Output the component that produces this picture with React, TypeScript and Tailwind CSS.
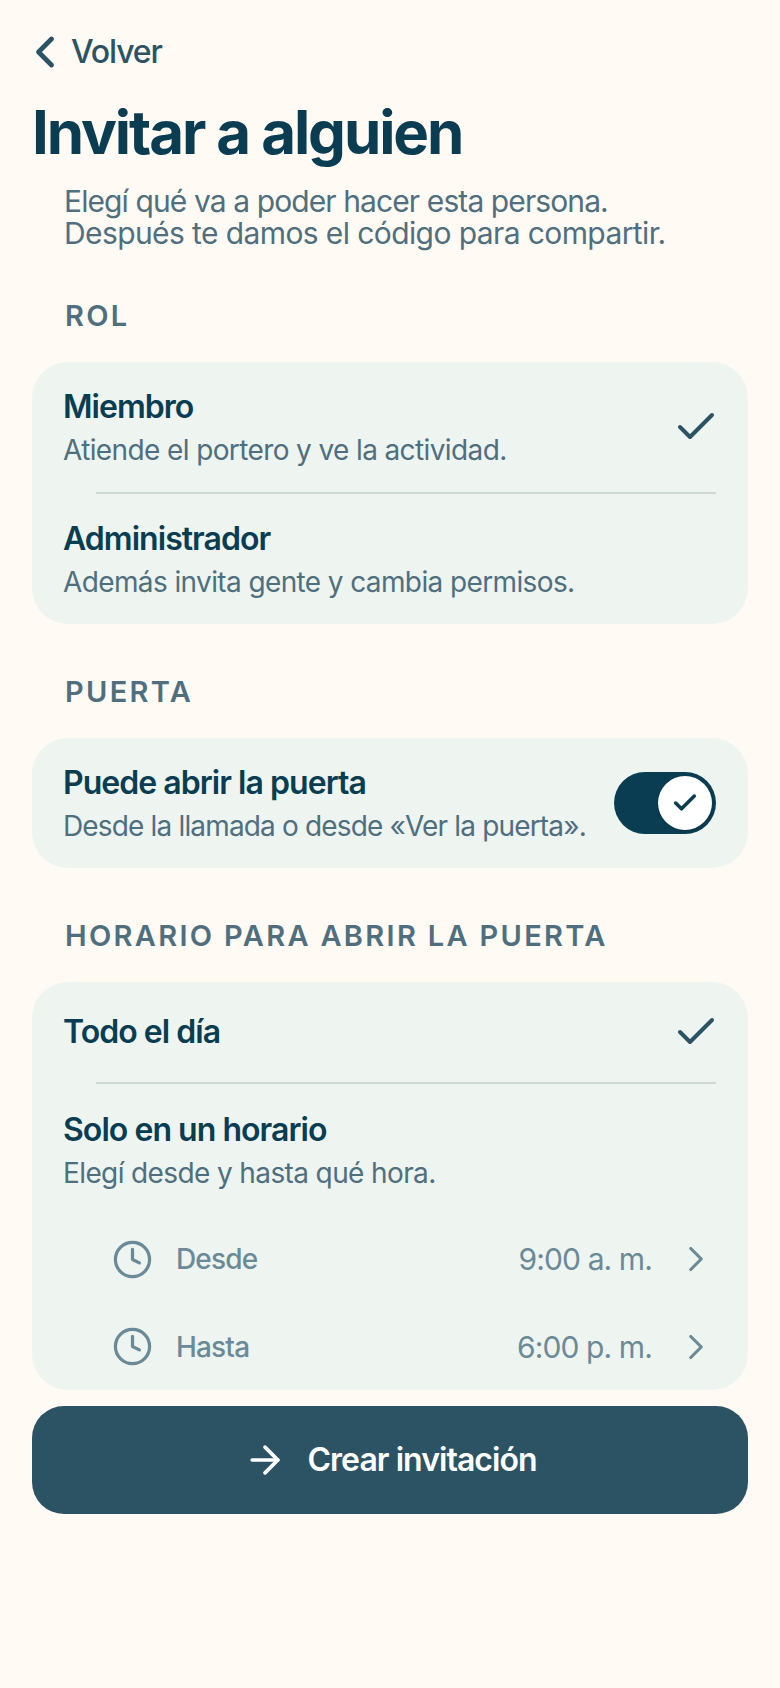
import { ArrowRight, Check, ChevronLeft, ChevronRight, Clock } from "lucide-react";

function SectionLabel({ children, className = "" }: { children: string; className?: string }) {
  return (
    <div className={`pl-[33px] text-[29px] leading-[32px] font-semibold tracking-[0.08em] text-[#4f6f7f] ${className}`}>
      {children}
    </div>
  );
}

function OptionRow({ title, sub, checked, className = "" }: { title: string; sub?: string; checked?: boolean; className?: string }) {
  return (
    <div className={`flex items-center justify-between pl-[31px] pr-[32px] ${className}`}>
      <div className={sub ? "pt-[3px]" : ""}>
        <div className="text-[32px] leading-[36px] font-semibold tracking-[-0.03em] text-[#0a3d52]">{title}</div>
        {sub && <div className="mt-[7px] text-[28px] leading-[36px] tracking-[-0.022em] text-[#4f6f7f]">{sub}</div>}
      </div>
      {checked && <Check size={48} strokeWidth={2} className="mr-[-4px] shrink-0 text-[#2c5364]" />}
    </div>
  );
}

function TimeRow({ label, value, className = "" }: { label: string; value: string; className?: string }) {
  return (
    <div className={`flex items-center pl-[80px] pr-[31px] text-[#6b8a98] ${className}`}>
      <Clock size={41} strokeWidth={1.9} className="shrink-0" />
      <span className="ml-[23px] text-[28px] leading-[36px] font-medium tracking-[-0.03em]">{label}</span>
      <span className="ml-auto text-[30px] leading-[36px] tracking-[-0.03em]">{value}</span>
      <ChevronRight size={42} strokeWidth={1.8} className="ml-[23px] shrink-0" />
    </div>
  );
}

export default function App() {
  return (
    <div className="min-h-[1688px] bg-[#fffaf3] px-[32px] pt-[26px] font-['Inter',sans-serif]">
      <div className="flex items-center text-[#2c5364]">
        <ChevronLeft size={52} strokeWidth={2.2} className="ml-[-13px]" />
        <span className="text-[32px] leading-[44px] font-medium tracking-[-0.035em]">Volver</span>
      </div>
      <h1 className="mt-[18px] text-[60px] leading-[72px] font-bold tracking-[-0.035em] text-[#0a3d52]">Invitar a alguien</h1>
      <p className="mt-[17px] pl-[32px] text-[30px] leading-[32px] text-[#4f6f7f]">
        <span className="tracking-[-0.03em]">Elegí qué va a poder hacer esta persona.</span>
        <br />
        <span className="tracking-[-0.02em]">Después te damos el código para compartir.</span>
      </p>

      <SectionLabel className="mt-[51px]">ROL</SectionLabel>
      <div className="mt-[30px] rounded-[36px] bg-[#eef4f0]">
        <OptionRow title="Miembro" sub="Atiende el portero y ve la actividad." checked className="h-[130px]" />
        <div className="mr-[32px] ml-[64px] h-[2px] bg-[#cddad6]" />
        <OptionRow title="Administrador" sub="Además invita gente y cambia permisos." className="h-[130px]" />
      </div>

      <SectionLabel className="mt-[52px]">PUERTA</SectionLabel>
      <div className="mt-[30px] flex h-[130px] items-center justify-between rounded-[36px] bg-[#eef4f0] pr-[32px] pl-[31px]">
        <div className="pt-[3px]">
          <div className="text-[32px] leading-[36px] font-semibold tracking-[-0.03em] text-[#0a3d52]">Puede abrir la puerta</div>
          <div className="mt-[7px] text-[28px] leading-[36px] tracking-[-0.03em] text-[#4f6f7f]">Desde la llamada o desde «Ver la puerta».</div>
        </div>
        <div className="flex h-[62px] w-[102px] shrink-0 items-center justify-end rounded-full bg-[#0a3d52] pr-[4px]">
          <div className="flex size-[54px] items-center justify-center rounded-full bg-white shadow-[0_1px_2px_rgba(0,0,0,0.2)]">
            <Check size={28} strokeWidth={3} className="text-[#0a3d52]" />
          </div>
        </div>
      </div>

      <SectionLabel className="mt-[52px]">HORARIO PARA ABRIR LA PUERTA</SectionLabel>
      <div className="mt-[30px] rounded-[36px] bg-[#eef4f0]">
        <OptionRow title="Todo el día" checked className="h-[100px]" />
        <div className="mr-[32px] ml-[64px] h-[2px] bg-[#cddad6]" />
        <OptionRow title="Solo en un horario" sub="Elegí desde y hasta qué hora." className="h-[131px]" />
        <TimeRow label="Desde" value="9:00 a. m." className="h-[88px]" />
        <TimeRow label="Hasta" value="6:00 p. m." className="h-[87px]" />
      </div>

      <div className="mt-[16px] flex h-[108px] items-center justify-center rounded-[32px] bg-[#2c5364] text-white">
        <ArrowRight size={44} strokeWidth={2} />
        <span className="ml-[20px] text-[32px] leading-[40px] font-semibold tracking-[-0.03em]">Crear invitación</span>
      </div>
    </div>
  );
}
